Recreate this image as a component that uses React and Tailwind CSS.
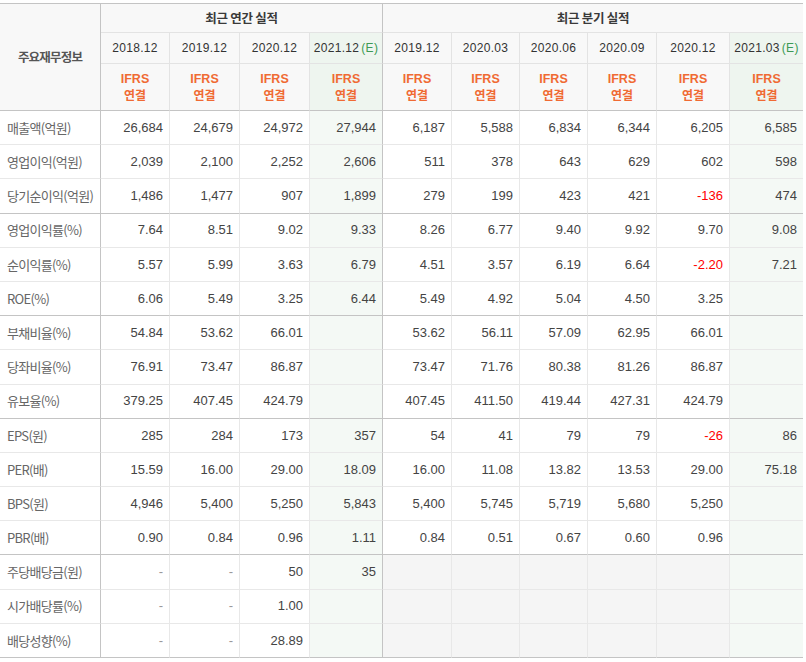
import React from "react";

const GRID =
  "grid grid-cols-[101px_69px_70px_70px_73px_69px_68px_68px_69px_73px_73px]";
const KR = "font-['Noto_Sans_CJK_KR',sans-serif]";
const NUM = "font-['Liberation_Sans','Noto_Sans_CJK_KR',sans-serif]";

const years = [
  ["2018.12", false],
  ["2019.12", false],
  ["2020.12", false],
  ["2021.12", true],
  ["2019.12", false],
  ["2020.03", false],
  ["2020.06", false],
  ["2020.09", false],
  ["2020.12", false],
  ["2021.03", true],
];

const rows = [
  ["매출액(억원)", ["26,684", "24,679", "24,972", "27,944", "6,187", "5,588", "6,834", "6,344", "6,205", "6,585"]],
  ["영업이익(억원)", ["2,039", "2,100", "2,252", "2,606", "511", "378", "643", "629", "602", "598"]],
  ["당기순이익(억원)", ["1,486", "1,477", "907", "1,899", "279", "199", "423", "421", "-136", "474"]],
  ["영업이익률(%)", ["7.64", "8.51", "9.02", "9.33", "8.26", "6.77", "9.40", "9.92", "9.70", "9.08"]],
  ["순이익률(%)", ["5.57", "5.99", "3.63", "6.79", "4.51", "3.57", "6.19", "6.64", "-2.20", "7.21"]],
  ["ROE(%)", ["6.06", "5.49", "3.25", "6.44", "5.49", "4.92", "5.04", "4.50", "3.25", ""]],
  ["부채비율(%)", ["54.84", "53.62", "66.01", "", "53.62", "56.11", "57.09", "62.95", "66.01", ""]],
  ["당좌비율(%)", ["76.91", "73.47", "86.87", "", "73.47", "71.76", "80.38", "81.26", "86.87", ""]],
  ["유보율(%)", ["379.25", "407.45", "424.79", "", "407.45", "411.50", "419.44", "427.31", "424.79", ""]],
  ["EPS(원)", ["285", "284", "173", "357", "54", "41", "79", "79", "-26", "86"]],
  ["PER(배)", ["15.59", "16.00", "29.00", "18.09", "16.00", "11.08", "13.82", "13.53", "29.00", "75.18"]],
  ["BPS(원)", ["4,946", "5,400", "5,250", "5,843", "5,400", "5,745", "5,719", "5,680", "5,250", ""]],
  ["PBR(배)", ["0.90", "0.84", "0.96", "1.11", "0.84", "0.51", "0.67", "0.60", "0.96", ""]],
  ["주당배당금(원)", ["-", "-", "50", "35", null, null, null, null, null, ""]],
  ["시가배당률(%)", ["-", "-", "1.00", "", null, null, null, null, null, ""]],
  ["배당성향(%)", ["-", "-", "28.89", "", null, null, null, null, null, ""]],
];

const groupEnds = [2, 5, 8, 12, 15];

function rightBorder(ci) {
  if (ci === 3) return "border-r border-r-[#c4c4c4]";
  if (ci === 9) return "";
  return "border-r border-r-[#e8e8e8]";
}

function headRight(ci) {
  if (ci === 3) return "border-r border-r-[#c4c4c4]";
  if (ci === 9) return "";
  return "border-r border-r-[#e3e3e3]";
}

export default function App() {
  return (
    <div className="w-[806px] h-[662px] bg-white pt-[3px]">
      <div className="w-[803px] border-t border-t-[#c4c4c4]">
        {/* header */}
        <div className={GRID + " grid-rows-[29px_31px_47px] bg-[#f8f8f8]"}>
          <div
            className={
              "row-span-3 flex items-center justify-center border-r border-r-[#c4c4c4] border-b border-b-[#c4c4c4] text-[12.5px] font-bold tracking-[-0.8px] text-[#555] " +
              KR
            }
          >
            주요재무정보
          </div>
          <div
            className={
              "col-span-4 flex items-center justify-center border-r border-r-[#c4c4c4] border-b border-b-[#e3e3e3] text-[12.5px] font-bold tracking-[-0.3px] text-[#3a3a3a] " +
              KR
            }
          >
            최근 연간 실적
          </div>
          <div
            className={
              "col-span-6 flex items-center justify-center border-b border-b-[#e3e3e3] text-[12.5px] font-bold tracking-[-0.3px] text-[#3a3a3a] " +
              KR
            }
          >
            최근 분기 실적
          </div>
          {years.map(([y, est], i) => (
            <div
              key={"y" + i}
              className={
                "flex items-center justify-center border-b border-b-[#e3e3e3] text-[12px] text-[#333] tracking-[0.3px] " +
                NUM +
                " " +
                headRight(i) +
                (est ? " bg-[#eef5ef]" : "")
              }
            >
              {y}
              {est && <span className="ml-[2px] text-[#3d9a55]">(E)</span>}
            </div>
          ))}
          {years.map(([, est], i) => (
            <div
              key={"f" + i}
              className={
                "flex flex-col items-center justify-center border-b border-b-[#c4c4c4] text-[12px] font-bold leading-[16px] text-[#f06a33] " +
                headRight(i) +
                (est ? " bg-[#eef5ef]" : "")
              }
            >
              <span className="font-['Liberation_Sans',sans-serif] text-[12.5px]">
                IFRS
              </span>
              <span className={KR}>연결</span>
            </div>
          ))}
        </div>

        {/* body */}
        <div className={GRID + " auto-rows-[34.1875px]"}>
          {rows.map(([label, vals], ri) => {
            const end = groupEnds.includes(ri);
            const bb = end
              ? "border-b border-b-[#c4c4c4]"
              : "border-b border-b-[#e8e8e8]";
            return (
              <React.Fragment key={ri}>
                <div
                  className={
                    "flex items-center pl-[7px] border-r border-r-[#c4c4c4] text-[13px] tracking-[-0.7px] text-[#666] " +
                    KR +
                    " " +
                    bb
                  }
                >
                  {label}
                </div>
                {vals.map((v, ci) => {
                  const est = ci === 3 || ci === 9;
                  const bg = est
                    ? "bg-[#f4f9f5]"
                    : v === null
                    ? "bg-[#f5f5f5]"
                    : "bg-white";
                  const neg = v && v.startsWith("-") && v.length > 1;
                  const dash = v === "-";
                  const color = neg
                    ? "text-[#f00]"
                    : dash
                    ? "text-[#999]"
                    : "text-[#444]";
                  return (
                    <div
                      key={ci}
                      className={
                        "flex items-center justify-end pr-[6px] text-[13px] " +
                        NUM +
                        " " +
                        bg +
                        " " +
                        color +
                        " " +
                        bb +
                        " " +
                        rightBorder(ci)
                      }
                    >
                      {v}
                    </div>
                  );
                })}
              </React.Fragment>
            );
          })}
        </div>
      </div>
    </div>
  );
}
